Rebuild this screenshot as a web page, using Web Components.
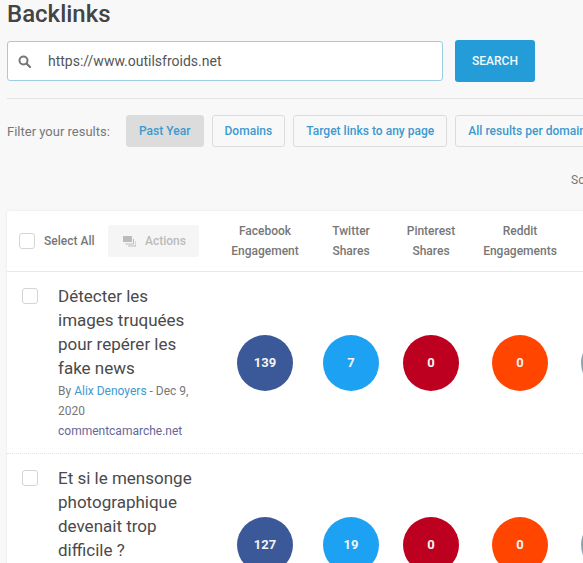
<!DOCTYPE html>
<html>
<head>
<meta charset="utf-8">
<title>Backlinks</title>
<style>
    html, body {
        margin: 0;
        height: 563px;
        overflow: hidden;
        background: #f8f8f8;
        font-family: Roboto, "Liberation Sans", sans-serif;
        color: #444;
    }
</style>
</head>
<body>
<backlinks-page>
    <search-bar value="https://www.outilsfroids.net"></search-bar>
    <filter-bar label="Filter your results:">
        <filter-button active>Past Year</filter-button>
        <filter-button>Domains</filter-button>
        <filter-button>Target links to any page</filter-button>
        <filter-button>All results per domain</filter-button>
    </filter-bar>
    <results-table>
        <result-row values="139,7,0,0" author="Alix Denoyers" date="Dec 9, 2020" site="commentcamarche.net">Détecter les images truquées pour repérer les fake news</result-row>
        <result-row values="127,19,0,0">Et si le mensonge photographique devenait trop difficile ?</result-row>
    </results-table>
</backlinks-page>

<script>
// shared by the table header and the rows, so the columns line up
const COLUMNS = "grid-template-columns: 212px 92px 80px 80px 98px 80px;";

class BacklinksPage extends HTMLElement {
    connectedCallback() {
        this.attachShadow({mode: "open"}).innerHTML = `
            <style>
                :host { display: block; width: 720px; padding-left: 7px; }
                h1 {
                    margin: 0;
                    height: 40px;
                    font-size: 24px;
                    line-height: 28px;
                    font-weight: 500;
                    color: #444;
                }
                .sort {
                    height: 64px;
                    padding: 25px 0 0 564px;
                    box-sizing: border-box;
                    font-size: 12px;
                    line-height: 16px;
                    color: #777;
                }
            </style>
            <h1>Backlinks</h1>
            <slot></slot>
            <div class="sort">Sort by</div>
            <slot name="table"></slot>`;
        this.querySelector("results-table").slot = "table";
    }
}

class SearchBar extends HTMLElement {
    connectedCallback() {
        this.attachShadow({mode: "open"}).innerHTML = `
            <style>
                :host {
                    display: flex;
                    align-items: center;
                    gap: 12px;
                    height: 42px;
                    padding-bottom: 16px;
                    border-bottom: 1px solid #e3e3e3;
                    margin-bottom: 16px;
                }
                .input {
                    display: flex;
                    align-items: center;
                    width: 436px;
                    height: 40px;
                    box-sizing: border-box;
                    background: #fff;
                    border: 1px solid #9ccde4;
                    border-radius: 3px;
                    padding-left: 10px;
                    font-size: 14px;
                    color: #555;
                }
                svg { width: 13px; height: 13px; margin-right: 17px; }
                button {
                    width: 80px;
                    height: 42px;
                    border: 0;
                    border-radius: 3px;
                    background: #249cd8;
                    color: #f2f9fd;
                    font: 500 12px Roboto, "Liberation Sans", sans-serif;
                }
            </style>
            <div class="input">
                <svg viewBox="0 0 13 13"><circle cx="5.5" cy="5.5" r="4" fill="none" stroke="#777" stroke-width="2"/><path d="M8.5 8.5l3.5 3.5" stroke="#777" stroke-width="2.2" stroke-linecap="round"/></svg>
                <span>${ this.getAttribute("value") }</span>
            </div>
            <button>SEARCH</button>`;
    }
}

class FilterBar extends HTMLElement {
    connectedCallback() {
        this.attachShadow({mode: "open"}).innerHTML = `
            <style>
                :host { display: flex; align-items: center; gap: 8px; height: 32px; white-space: nowrap; }
                span { font-size: 13px; color: #777; width: 111px; }
            </style>
            <span>${ this.getAttribute("label") }</span>
            <slot></slot>`;
    }
}

class FilterButton extends HTMLElement {
    connectedCallback() {
        this.attachShadow({mode: "open"}).innerHTML = `
            <style>
                :host {
                    display: flex;
                    align-items: center;
                    flex-shrink: 0;
                    height: 32px;
                    box-sizing: border-box;
                    padding: 0 12px;
                    border: 1px solid #dcdcdc;
                    border-radius: 3px;
                    font-size: 12px;
                    font-weight: 500;
                    letter-spacing: .02px;
                    color: #3b9ad0;
                }
                :host([active]) { background: #dcdcdc; }
            </style>
            <slot></slot>`;
    }
}

class CheckBox extends HTMLElement {
    connectedCallback() {
        this.attachShadow({mode: "open"}).innerHTML = `
            <style>
                :host {
                    display: block;
                    flex-shrink: 0;
                    width: 16px;
                    height: 16px;
                    box-sizing: border-box;
                    background: #fff;
                    border: 1px solid #d5d5d5;
                    border-radius: 3px;
                }
            </style>`;
    }
}

class ResultsTable extends HTMLElement {
    connectedCallback() {
        this.attachShadow({mode: "open"}).innerHTML = `
            <style>
                :host {
                    display: block;
                    background: #fff;
                    border-radius: 3px;
                    box-shadow: 0 0 3px rgba(0, 0, 0, .08);
                }
                .head {
                    display: grid;
                    ${ COLUMNS }
                    align-items: center;
                    height: 60px;
                    border-bottom: 1px solid #e8e8e8;
                    font-size: 12px;
                    line-height: 20px;
                    font-weight: 500;
                    color: #777;
                    text-align: center;
                }
                .select { display: flex; align-items: center; padding-left: 12px; color: #777; }
                .select span { margin-left: 9px; width: 64px; text-align: left; }
                .actions {
                    display: flex;
                    align-items: center;
                    width: 91px;
                    height: 32px;
                    background: #f5f5f5;
                    border-radius: 3px;
                    color: #bbb;
                    box-sizing: border-box;
                    padding-left: 15px;
                }
                .actions svg { width: 13px; height: 12px; margin-right: 9px; }
            </style>
            <div class="head">
                <div class="select">
                    <check-box></check-box>
                    <span>Select All</span>
                    <div class="actions">
                        <svg viewBox="0 0 13 12"><rect x="0" y="1" width="9" height="6" fill="#bbb"/><path d="M2.5 9h8v-5M5 11h8v-5" fill="none" stroke="#bbb"/></svg>
                        Actions
                    </div>
                </div>
                <div>Facebook<br>Engagement</div>
                <div>Twitter<br>Shares</div>
                <div>Pinterest<br>Shares</div>
                <div>Reddit<br>Engagements</div>
            </div>
            <slot></slot>`;
    }
}

class ResultRow extends HTMLElement {
    connectedCallback() {
        let author = this.getAttribute("author");
        let meta = author ? `
            <div class="meta">By <a>${ author }</a> - ${ this.getAttribute("date") }</div>
            <div class="meta site">${ this.getAttribute("site") }</div>` : "";
        let colors = ["#3b5998", "#1da1f2", "#bd001f", "#ff4500", "#8fa3ad"];
        // the fifth circle is only just in the frame, its number never shows
        let values = this.getAttribute("values").split(",").concat("");
        let circles = values.map((v, i) => `<stat-circle style="--bg: ${ colors[i] }">${ v }</stat-circle>`).join("");
        this.attachShadow({mode: "open"}).innerHTML = `
            <style>
                :host {
                    display: grid;
                    ${ COLUMNS }
                    align-items: center;
                    justify-items: center;
                    min-height: 181px;
                    border-bottom: 1px dotted #e3e3e3;
                }
                .main {
                    justify-self: stretch;
                    align-self: start;
                    display: flex;
                    gap: 20px;
                    padding: 12px 20px 0 15px;
                }
                check-box { margin-top: 4px; }
                .title { font-size: 17px; line-height: 24px; color: #4a4a4a; }
                .meta { font-size: 12px; line-height: 20px; color: #777; margin-top: 1px; }
                .site { color: #66669a; margin-top: 0; }
                a { color: #3b9ad0; }
            </style>
            <div class="main">
                <check-box></check-box>
                <div>
                    <div class="title"><slot></slot></div>
                    ${ meta }
                </div>
            </div>
            ${ circles }`;
    }
}

class StatCircle extends HTMLElement {
    connectedCallback() {
        this.attachShadow({mode: "open"}).innerHTML = `
            <style>
                :host {
                    display: flex;
                    align-items: center;
                    justify-content: center;
                    width: 56px;
                    height: 56px;
                    border-radius: 50%;
                    background: var(--bg);
                    color: #f4f4f4;
                    font-size: 13px;
                    font-weight: 700;
                }
            </style>
            <slot></slot>`;
    }
}

// inner elements first so the parents find them when they upgrade
customElements.define("check-box", CheckBox);
customElements.define("stat-circle", StatCircle);
customElements.define("result-row", ResultRow);
customElements.define("results-table", ResultsTable);
customElements.define("filter-button", FilterButton);
customElements.define("filter-bar", FilterBar);
customElements.define("search-bar", SearchBar);
customElements.define("backlinks-page", BacklinksPage);
</script>
</body>
</html>
